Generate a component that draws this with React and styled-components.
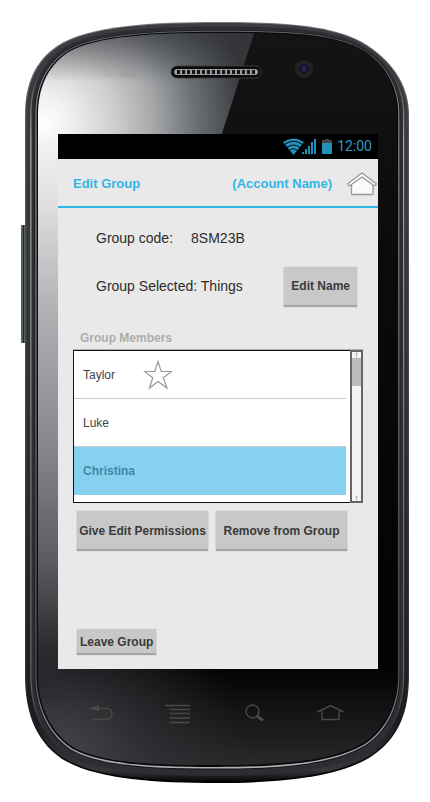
import React from "react";
import styled, { createGlobalStyle } from "styled-components";

const Global = createGlobalStyle`
  * { box-sizing: border-box; }
  body { margin: 0; background: #fff; font-family: "Liberation Sans", Arial, sans-serif; }
  button { font-family: inherit; cursor: pointer; }
`;

const Phone = styled.div`
  position: relative;
  min-height: 802px;
  padding: 134px 52px 0 58px;
  display: flex;
  flex-direction: column;
`;

const Frame = styled.svg`
  position: absolute;
  inset: 0;
  width: 100%;
  height: 100%;
`;

const Screen = styled.main`
  position: relative;
  min-height: 535px;
  background: #e9e9e9;
  display: flex;
  flex-direction: column;
`;

const StatusBar = styled.div`
  height: 25px;
  padding-right: 6px;
  background: #000;
  color: #2b9cc4;
  display: flex;
  align-items: center;
  justify-content: flex-end;
  font: 14px/25px Roboto, sans-serif;

  svg { margin-right: 4px; }
`;

const Header = styled.header`
  height: 49px;
  padding: 2px 1px 0 15px;
  border-bottom: 2px solid #33b5e5;
  display: flex;
  align-items: center;
  color: #33b5e5;
  font-size: 13px;
  font-weight: bold;
`;

const Title = styled.h1`
  flex: 1;
  margin: 0;
  font-size: 13px;
  line-height: 16px;
`;

const IconButton = styled.button`
  width: ${(p) => p.$width}px;
  height: 32px;
  padding: 0;
  border: 0;
  background: transparent;
  display: grid;
  place-items: center;
`;

const HomeButton = styled(IconButton)`
  margin-left: 14px;
`;

const Content = styled.section`
  flex: 1;
  padding: 20px 15px 15px;
  display: flex;
  flex-direction: column;
`;

const InfoRow = styled.div`
  min-height: ${(p) => p.$height}px;
  padding: 0 6px 0 23px;
  display: flex;
  align-items: center;
  justify-content: ${(p) => (p.$spread ? "space-between" : "flex-start")};
  gap: 18px;
  color: #2c2c2c;
  font-size: 14px;
  line-height: 20px;
`;

const Button = styled.button`
  height: ${(p) => (p.$small ? 25 : 39)}px;
  padding: 0 ${(p) => (p.$small ? 3 : 0)}px;
  border: 0;
  background: #c8c8c8;
  box-shadow: inset 0 -1px #a4a4a4, 0 1px 1px #a8a8a8, 0 0 1px #bbb;
  color: #3a3a3a;
  font-size: 12px;
  font-weight: bold;
  white-space: nowrap;
`;

const EditButton = styled(Button)`
  padding: 0 7px;
`;

const ListTitle = styled.h2`
  margin: 5px 0 2px 7px;
  color: #adadad;
  font-size: 12px;
  line-height: 18px;
`;

const ListBox = styled.div`
  height: 154px;
  border-top: 1px solid #b0b0b0;
  display: flex;
`;

const List = styled.ul`
  flex: 1;
  margin: 0;
  padding: 0 4px 0 0;
  border: 1px solid #111;
  border-right: 0;
  background: #fff;
  list-style: none;
`;

const Member = styled.li`
  height: 48px;
  border-bottom: ${(p) => (p.$selected ? "0" : "1px solid #ccc")};
  background: ${(p) => (p.$selected ? "#87d1f0" : "#fff")};
`;

const MemberButton = styled.button`
  width: 100%;
  height: 100%;
  padding: 0 9px;
  border: 0;
  background: transparent;
  display: flex;
  align-items: center;
  gap: 28px;
  color: ${(p) => (p.$selected ? "#3c88a8" : "#444")};
  font-size: 12px;
  font-weight: ${(p) => (p.$selected ? "bold" : "normal")};
`;

const ScrollTrack = styled.div`
  width: 13px;
  border: 2px solid #666;
  background: #f4f4f4;
  display: flex;
  flex-direction: column;
  align-items: center;
`;

const ScrollThumb = styled.div`
  width: 100%;
  height: 28px;
  background: #bdbdbd;
  margin-bottom: auto;
`;

const Actions = styled.div`
  margin-top: 8px;
  padding: 0 16px 0 4px;
  display: grid;
  grid-template-columns: 1fr 1fr;
  gap: 8px;
`;

const LeaveRow = styled.div`
  margin-top: auto;
  padding-left: 4px;
`;

const NavKeys = styled.nav`
  position: relative;
  padding: 28px 32px 0 29px;
  display: flex;
  justify-content: space-between;
`;

const OUTER = [
  [25, 115], [25, 84], [35, 61], [57, 46], [88, 25], [155, 22], [217, 22],
  [279, 22], [330, 24], [362, 42], [391, 59], [409, 84], [409, 115],
  [409, 675], [409, 710], [400, 737], [372, 756], [340, 777], [282, 783], [217, 783],
  [152, 783], [95, 779], [62, 759], [33, 739], [25, 708], [25, 675],
];
const INNER = [
  [38, 115], [38, 90], [46, 68], [67, 53], [95, 36], [155, 33], [217, 33],
  [279, 33], [322, 34], [353, 46], [382, 59], [397, 84], [397, 115],
  [397, 675], [397, 702], [386, 728], [363, 743], [332, 761], [282, 765], [217, 765],
  [152, 765], [102, 763], [73, 747], [48, 730], [38, 702], [38, 675],
];

function ring(t) {
  const p = OUTER.map(([x, y], i) => {
    const [a, b] = INNER[i];
    return `${(x + (a - x) * t).toFixed(2)} ${(y + (b - y) * t).toFixed(2)}`;
  });
  const c = (i) => `C${p[i]} ${p[i + 1]} ${p[i + 2]}`;
  return `M${p[0]}${c(1)}${c(4)}${c(7)}${c(10)}L${p[13]}${c(14)}${c(17)}${c(20)}${c(23)}Z`;
}

const LAYERS = [
  [0, "url(#edge)"],
  [0.1, "url(#rim)"],
  [0.4, "url(#shineMid)"],
  [0.5, "#2d2d32"],
  [0.74, "#15151a"],
  [0.8, "url(#shine)"],
  [0.89, "#09090b"],
];

function PhoneFrame() {
  return (
    <Frame viewBox="0 0 430 802" preserveAspectRatio="none" aria-hidden="true">
      <defs>
        <linearGradient id="edge" x2="0" y2="1">
          <stop offset="0" stopColor="#77797c" />
          <stop offset=".12" stopColor="#55595c" />
          <stop offset=".85" stopColor="#303135" />
          <stop offset="1" stopColor="#000" />
        </linearGradient>
        <linearGradient id="rim" x2="0" y2="1">
          <stop offset="0" stopColor="#3c3e42" />
          <stop offset=".5" stopColor="#303136" />
          <stop offset=".92" stopColor="#1b1c1f" />
          <stop offset=".985" stopColor="#36373b" />
          <stop offset="1" stopColor="#08080a" />
        </linearGradient>
        <linearGradient id="shine" x2="0" y2="1">
          <stop offset="0" stopColor="#62656a" />
          <stop offset=".15" stopColor="#a09da2" />
          <stop offset=".6" stopColor="#75747b" />
          <stop offset=".88" stopColor="#606168" />
          <stop offset="1" stopColor="#b0b0b3" />
        </linearGradient>
        <linearGradient id="shineMid" x2="0" y2="1">
          <stop offset="0" stopColor="#2d2d32" />
          <stop offset=".06" stopColor="#3d3e43" />
          <stop offset=".15" stopColor="#aaa7ab" />
          <stop offset=".6" stopColor="#75747b" />
          <stop offset=".87" stopColor="#606168" />
          <stop offset=".94" stopColor="#2d2d32" />
        </linearGradient>
        <linearGradient id="face" x2="0" y2="1">
          <stop offset="0" stopColor="#141414" />
          <stop offset=".3" stopColor="#0b0b0b" />
          <stop offset=".86" stopColor="#020202" />
          <stop offset="1" stopColor="#292b2d" />
        </linearGradient>
        <radialGradient id="glare" gradientUnits="userSpaceOnUse" cx="42" cy="125" r="205">
          <stop offset="0" stopColor="#fff" />
          <stop offset=".14" stopColor="#f0f0f0" />
          <stop offset=".35" stopColor="#cfcfd0" />
          <stop offset=".55" stopColor="#a4a6a8" />
          <stop offset=".75" stopColor="#6c7073" />
          <stop offset="1" stopColor="#36383c" />
        </radialGradient>
        <linearGradient id="side" x2="0" y2="1">
          <stop offset="0" stopColor="#f4f4f4" />
          <stop offset=".12" stopColor="#dedede" />
          <stop offset=".32" stopColor="#acacb1" />
          <stop offset=".52" stopColor="#888c90" />
          <stop offset=".74" stopColor="#5c5b61" />
          <stop offset=".86" stopColor="#343539" />
          <stop offset="1" stopColor="#222326" stopOpacity="0" />
        </linearGradient>
        <radialGradient id="lowglow" gradientUnits="userSpaceOnUse" cx="55" cy="760" r="190">
          <stop offset="0" stopColor="#484a4e" />
          <stop offset=".5" stopColor="#34363a" stopOpacity=".6" />
          <stop offset="1" stopColor="#303234" stopOpacity="0" />
        </radialGradient>
        <linearGradient id="topshade" x2="0" y2="1">
          <stop offset="0" stopColor="#303236" stopOpacity=".65" />
          <stop offset="1" stopColor="#303236" stopOpacity="0" />
        </linearGradient>
        <clipPath id="glass"><path d={ring(1)} /></clipPath>
      </defs>
      <rect x="21" y="225" width="6" height="118" rx="1" fill="#56605f" />
      <path d="M23.5 225v118" stroke="#24292a" />
      {LAYERS.map(([t, fill]) => <path key={t} d={ring(t)} fill={fill} />)}
      <g clipPath="url(#glass)">
        <rect x="36" y="30" width="364" height="740" fill="url(#face)" />
        <rect x="36" y="560" width="220" height="210" fill="url(#lowglow)" />
        <path d="M36 30H255L220 140H36Z" fill="url(#glare)" />
        <rect x="36" y="138" width="24" height="572" fill="url(#side)" />
        <path d="M36 30H255L238 82H36Z" fill="url(#topshade)" />
      </g>
      <circle cx="109" cy="72" r="6" fill="#a9a9ad" opacity=".4" />
      <rect x="119" y="66" width="20" height="11" rx="5.5" fill="#97989c" opacity=".4" />
      <rect x="171" y="66" width="90" height="12" rx="6" fill="#08080a" stroke="#3a3b3e" />
      <rect x="174" y="69" width="84" height="6" rx="3" fill="#9b9b9e" />
      <path d="M177 72H256" stroke="#151518" strokeWidth="4" strokeDasharray="3 2" />
      <circle cx="304" cy="69" r="9" fill="#232327" />
      <circle cx="304" cy="69" r="5" fill="#17151d" />
      <circle cx="304" cy="69" r="2" fill="#190c3e" stroke="#4c2a94" />
    </Frame>
  );
}

function StatusIcons() {
  return (
    <svg width="50" height="17" viewBox="0 0 50 17" aria-hidden="true">
      <path d="M0 4Q10.500-3 21 4L10.500 17Z" fill="#2292bb" />
      <g fill="none" stroke="#000" strokeWidth="1">
        <path d="M1.500 6.500Q10.500 0 19.500 6.500M4 9.500Q10.500 4.500 17 9.500M6.500 12.500Q10.500 9 14.500 12.500" />
      </g>
      <path d="M19 16h2v-2h-2zM22 16h2v-5h-2zM25 16h2v-8h-2zM28 16h2v-12h-2zM31 16h2V1h-2z" fill="#2292bb" />
      <path d="M39 5V2h3V1h4v1h3v3Z" fill="#474747" />
      <path d="M39 5h10v11H39z" fill="#2292bb" />
    </svg>
  );
}

function HomeIcon() {
  return (
    <svg width="30" height="24" viewBox="0 0 30 24" fill="#fafafa" stroke="#999" strokeWidth="1.300" strokeLinejoin="round" aria-hidden="true">
      <path d="M4.500 11.500V22q0 .5.500.5H25.500q.5 0 .5-.5V11.500L15 4Z" />
      <path d="M1 11.500L15 1l14 10.500q.5.700-.2 1.200l-1 .8q-.5.300-1 0L15 5 3 13.500q-.5.300-1 0l-1-.8q-.7-.6 0-1.200Z" />
    </svg>
  );
}

const StarIcon = () => (
  <svg width="30" height="30" viewBox="0 0 30 30" fill="#fff" stroke="#999" strokeWidth="1.200" aria-hidden="true">
    <path d="M15 1.500L18.200 11.500H28.500L20.300 17.800L24 28L15 21.500L6.500 28L9.700 17.800L1.500 11.500H11.800Z" />
  </svg>
);

const ScrollArrow = () => (
  <svg width="5" height="6" viewBox="0 0 5 6" aria-hidden="true">
    <path d="M2.500 0L4 2.500H3V6H2V2.500H1Z" fill="#bbb" />
  </svg>
);

const KEYS = [
  {
    label: "Back",
    art: (
      <>
        <path d="M3 7.500H19q6 0 6 5.500t-6 5.500H6" />
        <path d="M3 7.500L12 4v6.500Z" fill="#4d4846" stroke="none" />
      </>
    ),
  },
  { label: "Menu", art: <path d="M2 4.500H27M6.500 8.500H27M6.500 12.500H27M6.500 17H27M6.500 21.500H27" /> },
  {
    label: "Search",
    art: (
      <>
        <circle cx="12.500" cy="10.500" r="6.500" />
        <path d="M17 15l6 4.500" strokeWidth="3" />
      </>
    ),
  },
  { label: "Home", art: <path d="M1.500 11L14.500 4.500 27.500 11M6 10V18.500H23V10" /> },
];

const MEMBERS = [
  { name: "Taylor", starred: true },
  { name: "Luke" },
  { name: "Christina", selected: true },
];

export default function App() {
  return (
    <>
      <Global />
      <Phone>
        <PhoneFrame />
        <Screen>
          <StatusBar>
            <StatusIcons />
            <span>12:00</span>
          </StatusBar>
          <Header>
            <Title>Edit Group</Title>
            <span>(Account Name)</span>
            <HomeButton $width={31} aria-label="Home screen"><HomeIcon /></HomeButton>
          </Header>
          <Content>
            <InfoRow $height={20}>
              <span>Group code:</span>
              <span>8SM23B</span>
            </InfoRow>
            <InfoRow $height={76} $spread>
              <span>Group Selected: Things</span>
              <EditButton>Edit Name</EditButton>
            </InfoRow>
            <ListTitle>Group Members</ListTitle>
            <ListBox>
              <List>
                {MEMBERS.map((m) => (
                  <Member key={m.name} $selected={m.selected}>
                    <MemberButton $selected={m.selected} aria-pressed={!!m.selected}>
                      {m.name}
                      {m.starred && <StarIcon />}
                    </MemberButton>
                  </Member>
                ))}
              </List>
              <ScrollTrack>
                <ScrollArrow />
                <ScrollThumb />
                <ScrollArrow />
              </ScrollTrack>
            </ListBox>
            <Actions>
              <Button>Give Edit Permissions</Button>
              <Button>Remove from Group</Button>
            </Actions>
            <LeaveRow><Button $small>Leave Group</Button></LeaveRow>
          </Content>
        </Screen>
        <NavKeys aria-label="Device keys">
          {KEYS.map((k) => (
            <IconButton key={k.label} $width={30} aria-label={k.label}>
              <svg width="30" height="24" viewBox="0 0 30 24" fill="none" stroke="#4d4846" strokeWidth="1.400" aria-hidden="true">
                {k.art}
              </svg>
            </IconButton>
          ))}
        </NavKeys>
      </Phone>
    </>
  );
}
